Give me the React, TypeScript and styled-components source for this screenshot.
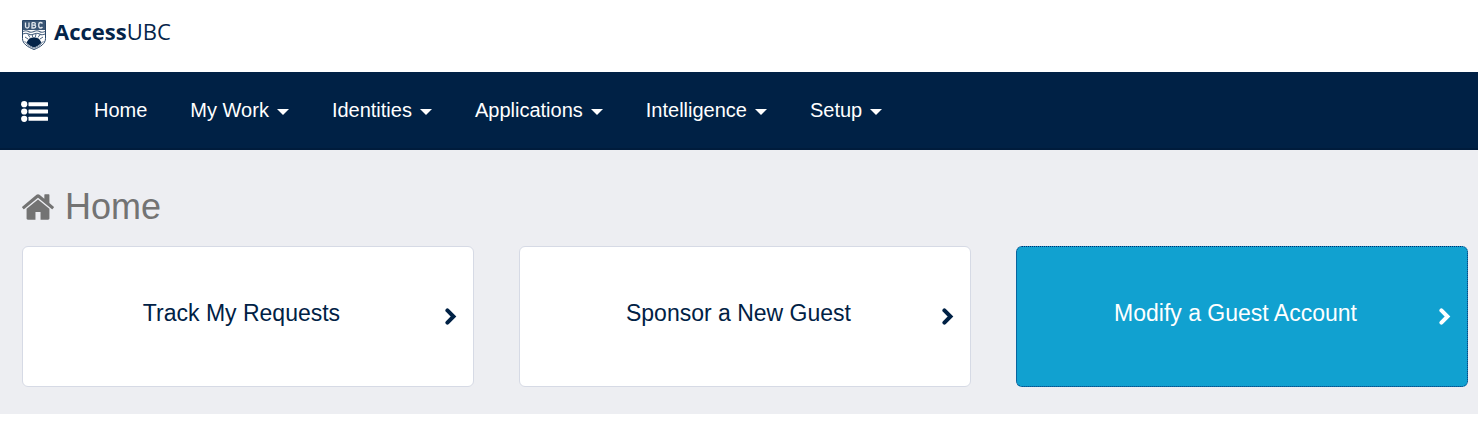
import React from "react";
import styled, { createGlobalStyle } from "styled-components";

const GlobalStyle = createGlobalStyle`
  *, *::before, *::after { box-sizing: border-box; }
  body {
    margin: 0;
    background: #fff;
    font-family: "Liberation Sans", Arial, sans-serif;
  }
`;

const Masthead = styled.header`
  display: flex;
  align-items: center;
  height: 72px;
  padding: 0 22px 3px;
`;

const BrandLink = styled.a`
  display: flex;
  align-items: center;
  gap: 8px;
  color: #052449;
  text-decoration: none;
`;

const BrandName = styled.span`
  font: 400 22px/28px "Open Sans", sans-serif;
  padding-bottom: 8px;

  strong {
    font-weight: 700;
  }
`;

const NavBar = styled.nav`
  display: flex;
  align-items: flex-start;
  min-height: 78px;
  padding: 24px 21px;
  background: #002145;
  border-bottom: 2px solid #001c3c;
`;

const navControl = `
  display: flex;
  align-items: center;
  height: 28px;
  padding: 0;
  border: 0;
  background: none;
  color: #fff;
  font: 20px/28px "Liberation Sans", Arial, sans-serif;
  text-decoration: none;
  white-space: nowrap;
  cursor: pointer;
`;

const MenuToggle = styled.button`
  ${navControl}
  width: 27px;
  padding-top: 3px;
  margin-right: 46px;
`;

const NavList = styled.ul`
  display: flex;
  gap: 43px;
  margin: 0;
  padding: 0;
  list-style: none;
`;

const NavLink = styled.a`
  ${navControl}
`;

const NavButton = styled.button`
  ${navControl}
`;

const Caret = styled.span`
  width: 12px;
  margin: 4px 0 0 8px;
  border: 6px solid transparent;
  border-top-color: #fff;
  border-bottom: 0;
`;

const Content = styled.main`
  padding: 37px 10px 27px 22px;
  background: #edeef2;
`;

const PageTitle = styled.h1`
  display: flex;
  align-items: center;
  gap: 11px;
  margin: 0 0 19px;
  color: #737373;
  font-size: 36px;
  font-weight: 400;
  line-height: 40px;
`;

const CardGrid = styled.div`
  display: grid;
  grid-template-columns: repeat(3, 1fr);
  gap: 45px;
`;

const Card = styled.a<{ $active?: boolean }>`
  display: flex;
  align-items: center;
  min-height: 141px;
  padding: 0 16px 0 15px;
  border: 1px ${(p) => (p.$active ? "dotted #002a6e" : "solid #d6dae5")};
  border-radius: 6px;
  background: ${(p) => (p.$active ? "#11a1d0" : "#fff")};
  color: ${(p) => (p.$active ? "#fff" : "#002145")};
  text-decoration: none;
`;

const CardLabel = styled.span`
  flex: 1;
  padding-bottom: 8px;
  font-size: 23px;
  line-height: 32px;
  text-align: center;
`;

const Crest = () => (
  <svg width="24" height="30" viewBox="0 0 24 30" aria-hidden="true">
    <path d="M.5.5h23v18c0 5-5 8.500-11.500 11C5.500 27 .5 23.500.5 18.500z" fill="#fff" stroke="#274466" />
    <path d="M1 1h22v9H1z" fill="#3b5675" />
    <g fill="none" stroke="#dfe5ec" strokeWidth="1.300">
      <path d="M3.500 2.500v4q0 1.500 1.700 1.500T7 6.500v-4" />
      <path d="M10 2.500v5.500h2q1.700 0 1.700-1.400T12 5.200h-2 1.800q1.500 0 1.500-1.300T12 2.600h-2" />
      <path d="M20.500 3.500q-.8-1-2-1-1.800 0-1.800 2.700T18.500 8q1.200 0 2-1" />
    </g>
    <path d="M1 11.500q3-1.500 5.500 0t5.500 0 5.500 0 5.500 0M1 14q3-1.500 5.500 0t5.500 0 5.500 0 5.500 0" fill="none" stroke="#4d6582" strokeWidth="1.200" />
    <path d="M3 17l3 2M6 14.500l2 3M10 14l.7 3M14 14l-.7 3M18 14.500l-2 3M21 17l-3 2" stroke="#4d6582" />
    <path d="M4.500 22.500l2.500-3.700q5-3 10 0l2.500 3.700q-2 3-7.500 5-5.500-2-7.500-5z" fill="#052449" />
    <path d="M2.500 21q3 5.500 9.500 7.200Q18.500 26.500 21.500 21" fill="none" stroke="#7d8fa5" />
  </svg>
);

const ListIcon = () => (
  <svg width="27" height="21" viewBox="0 0 27 21" fill="currentColor" aria-hidden="true">
    <circle cx="3.200" cy="3.200" r="3.100" />
    <circle cx="3.200" cy="10.500" r="3.100" />
    <circle cx="3.200" cy="17.800" r="3.100" />
    <rect x="7.500" y="1.200" width="19.500" height="4" rx=".4" />
    <rect x="7.500" y="8.500" width="19.500" height="4" rx=".4" />
    <rect x="7.500" y="15.800" width="19.500" height="4" rx=".4" />
  </svg>
);

const HomeIcon = () => (
  <svg width="32" height="26" viewBox="25 250 1614 1288" fill="currentColor" aria-hidden="true">
    <path d="M1408 992v480q0 26-19 45t-45 19h-384v-384h-256v384h-384q-26 0-45-19t-19-45v-480q0-1 .5-3t.5-3l575-474 575 474q1 2 1 6zm223-69l-62 74q-8 9-21 11h-3q-13 0-21-7l-692-577-692 577q-12 8-24 7-13-2-21-11l-62-74q-8-10-7-23.500t11-21.500l719-599q32-26 76-26t76 26l244 204v-195q0-14 9-23t23-9h192q14 0 23 9t9 23v408l219 182q10 8 11 21.500t-7 23.500z" />
  </svg>
);

const ChevronIcon = () => (
  <svg width="12" height="17" viewBox="0 0 12 17" fill="none" stroke="currentColor" strokeWidth="4" strokeLinecap="round" aria-hidden="true">
    <path d="M2.400 2.400l6.100 6.100-6.100 6.100" />
  </svg>
);

const menus = ["My Work", "Identities", "Applications", "Intelligence", "Setup"];

const cards = [
  { label: "Track My Requests" },
  { label: "Sponsor a New Guest" },
  { label: "Modify a Guest Account", active: true },
];

export default function App() {
  return (
    <>
      <GlobalStyle />
      <Masthead>
        <BrandLink href="#">
          <Crest />
          <BrandName>
            <strong>Access</strong>UBC
          </BrandName>
        </BrandLink>
      </Masthead>
      <NavBar>
        <MenuToggle type="button" aria-label="Quick links">
          <ListIcon />
        </MenuToggle>
        <NavList>
          <li>
            <NavLink href="#">Home</NavLink>
          </li>
          {menus.map((name) => (
            <li key={name}>
              <NavButton type="button" aria-haspopup="true">
                {name}
                <Caret />
              </NavButton>
            </li>
          ))}
        </NavList>
      </NavBar>
      <Content>
        <PageTitle>
          <HomeIcon />
          Home
        </PageTitle>
        <CardGrid>
          {cards.map((card) => (
            <Card key={card.label} href="#" $active={card.active}>
              <CardLabel>{card.label}</CardLabel>
              <ChevronIcon />
            </Card>
          ))}
        </CardGrid>
      </Content>
    </>
  );
}
